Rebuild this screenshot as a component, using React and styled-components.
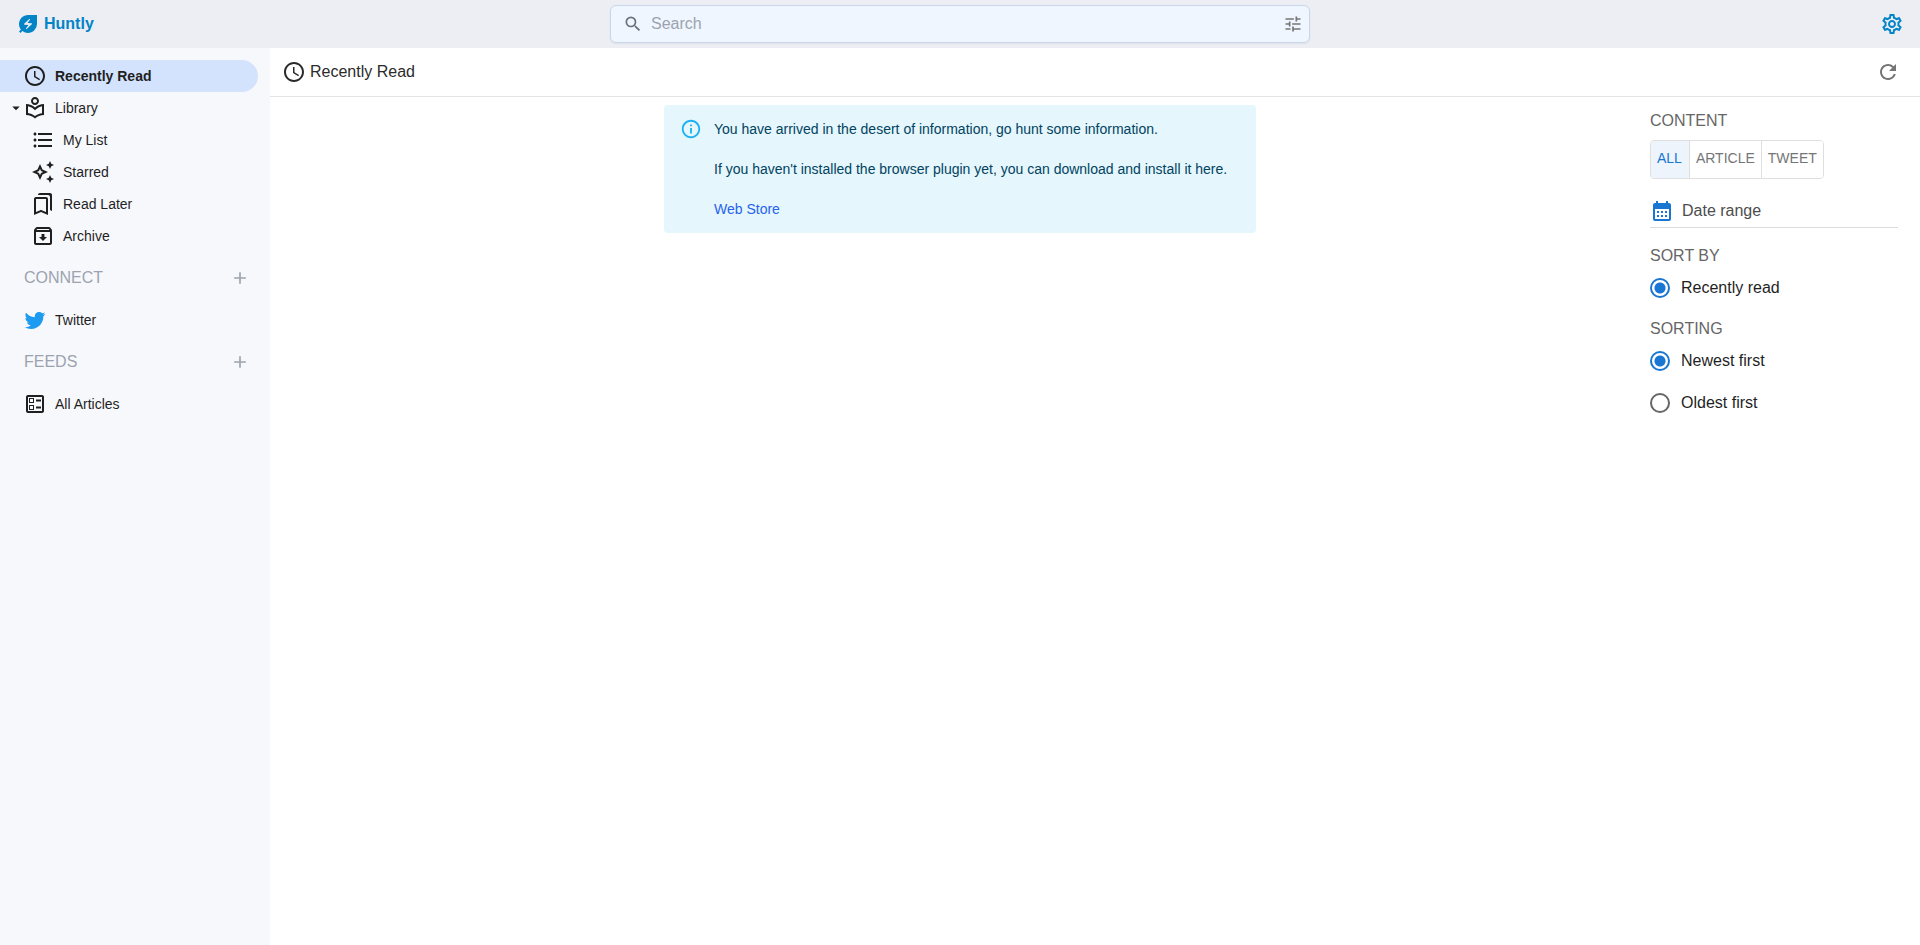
import React, { useState } from "react";
import styled, { createGlobalStyle } from "styled-components";
import {
  MdAccessTime,
  MdAdd,
  MdArrowDropDown,
  MdCalendarMonth,
  MdEnergySavingsLeaf,
  MdFormatListBulleted,
  MdInfoOutline,
  MdOutlineArchive,
  MdOutlineAutoAwesome,
  MdOutlineBallot,
  MdOutlineBookmarks,
  MdOutlineLocalLibrary,
  MdOutlineSettings,
  MdRefresh,
  MdSearch,
  MdTune
} from "react-icons/md";

const GlobalStyle = createGlobalStyle`
  * {
    box-sizing: border-box;
  }
  body {
    margin: 0;
    background: #fff;
    color: #1f1f1f;
    font-family: Arial, "Liberation Sans", Helvetica, sans-serif;
    font-size: 14px;
  }
  button, input {
    font-family: inherit;
  }
  svg {
    display: block;
    flex-shrink: 0;
  }
`;

const Page = styled.div`
  display: flex;
  flex-direction: column;
  min-height: 100vh;
`;

const Header = styled.header`
  display: grid;
  grid-template-columns: 1fr minmax(0, 700px) 1fr;
  align-items: center;
  height: 48px;
  padding: 0 16px;
  background: #edeef4;
`;

const Brand = styled.a`
  display: flex;
  align-items: center;
  gap: 4px;
  color: #0284c7;
  font-size: 16px;
  font-weight: 700;
  text-decoration: none;
`;

const SearchBox = styled.label`
  display: flex;
  align-items: center;
  gap: 8px;
  height: 38px;
  padding: 0 6px 0 12px;
  border: 1px solid #c8d6e8;
  border-radius: 6px;
  background: #eff6ff;
  box-shadow: 0 1px 2px rgba(0, 0, 0, 0.05);
  color: #6b6f76;
`;

const SearchInput = styled.input`
  flex: 1;
  min-width: 0;
  padding: 0;
  border: none;
  outline: none;
  background: transparent;
  font-size: 16px;

  &::placeholder {
    color: #9ca3af;
    opacity: 1;
  }
`;

const IconButton = styled.button`
  display: flex;
  align-items: center;
  justify-content: center;
  padding: 0;
  border: none;
  background: transparent;
  color: ${props => props.$color || "#757575"};
  cursor: pointer;
`;

const HeaderRight = styled.div`
  display: flex;
  justify-content: flex-end;
`;

const Body = styled.div`
  display: flex;
  flex: 1;
`;

const Sidebar = styled.nav`
  flex: 0 0 270px;
  padding: 12px 12px 0 0;
  background: #f7f8fc;
`;

const NavItem = styled.a`
  display: flex;
  align-items: center;
  gap: 8px;
  height: 32px;
  padding-left: ${props => (props.$child ? 31 : props.$expandable ? 7 : 23)}px;
  border-radius: 0 16px 16px 0;
  background: ${props => (props.$active ? "#d3e3fd" : "transparent")};
  color: #1f1f1f;
  font-weight: ${props => (props.$active ? 700 : 400)};
  text-decoration: none;
`;

const NavIcons = styled.span`
  display: flex;
  align-items: center;
  color: ${props => props.$color || "inherit"};
`;

const ExpandArrow = styled(MdArrowDropDown)`
  margin-right: -2px;
`;

const NavHeading = styled.div`
  display: flex;
  align-items: center;
  justify-content: space-between;
  height: 52px;
  padding: 0 8px 0 24px;
  color: #9ca3af;
  font-size: 16px;
`;

const Main = styled.main`
  display: flex;
  flex: 1;
  flex-direction: column;
  min-width: 0;
`;

const TitleBar = styled.div`
  display: flex;
  align-items: center;
  justify-content: space-between;
  height: 49px;
  padding: 0 20px 0 12px;
  border-bottom: 1px solid #e5e5e5;
`;

const PageTitle = styled.h1`
  display: flex;
  align-items: center;
  gap: 4px;
  margin: 0;
  color: #2b2b2b;
  font-size: 16px;
  font-weight: 400;
`;

const Content = styled.div`
  display: flex;
  flex: 1;
`;

const Feed = styled.section`
  display: flex;
  flex: 1;
  align-items: flex-start;
  justify-content: center;
  padding-top: 8px;
`;

const Alert = styled.div`
  display: flex;
  gap: 12px;
  width: 592px;
  max-width: 100%;
  padding: 14px 16px;
  border-radius: 4px;
  background: #e5f6fd;
  color: #014361;
`;

const AlertIcon = styled.div`
  display: flex;
  align-items: center;
  height: 20px;
  color: #1cb0f6;
`;

const AlertText = styled.div`
  display: flex;
  flex-direction: column;
  gap: 20px;
  line-height: 20px;

  p {
    margin: 0;
  }
  a {
    color: #2563eb;
    text-decoration: none;
  }
`;

const Filters = styled.aside`
  flex: 0 0 270px;
  padding: 13px 22px 0 0;
`;

const FilterTitle = styled.h2`
  margin: 0;
  color: #666;
  font-size: 16px;
  font-weight: 400;
  line-height: 22px;
`;

const ToggleGroup = styled.div`
  display: flex;
  width: fit-content;
  margin: 8px 0 16px;
  border: 1px solid #dfdfdf;
  border-radius: 4px;
  overflow: hidden;
`;

const Toggle = styled.button`
  height: 37px;
  padding: 0 6px 4px;
  border: none;
  border-left: 1px solid #dfdfdf;
  background: ${props => (props.$on ? "#edf4fc" : "#fff")};
  color: ${props => (props.$on ? "#1976d2" : "#757575")};
  font-size: 14px;
  cursor: pointer;

  &:first-child {
    padding: 0 7px 4px 6px;
    border-left: none;
  }
`;

const DateField = styled.label`
  display: flex;
  align-items: center;
  gap: 8px;
  height: 33px;
  margin-bottom: 17px;
  border-bottom: 1px solid #dcdcdc;
  color: #1976d2;
`;

const DateInput = styled.input`
  flex: 1;
  min-width: 0;
  padding: 0;
  border: none;
  outline: none;
  background: transparent;
  font-size: 16px;

  &::placeholder {
    color: #4d4d4d;
    opacity: 1;
  }
`;

const RadioGroup = styled.div`
  display: flex;
  flex-direction: column;
  margin-bottom: 9px;
`;

const RadioLabel = styled.label`
  display: flex;
  align-items: center;
  gap: 11px;
  height: 42px;
  color: #1f1f1f;
  font-size: 16px;
`;

const Radio = styled.input`
  width: 20px;
  height: 20px;
  margin: 0;
  appearance: none;
  border: 2px solid #666;
  border-radius: 50%;

  &:checked {
    border-color: #1976d2;
    background: radial-gradient(circle, #1976d2 5px, transparent 6px);
  }
`;

const TwitterIcon = () => (
  <svg width="24" height="24" viewBox="0 0 24 24" fill="currentColor">
    <path d="M22.46 6c-.77.35-1.6.58-2.46.69.88-.53 1.56-1.37 1.88-2.38-.83.5-1.75.85-2.72 1.05C18.37 4.5 17.26 4 16 4c-2.35 0-4.27 1.92-4.27 4.29 0 .34.04.67.11.98C8.28 9.09 5.11 7.38 3 4.79c-.37.63-.58 1.37-.58 2.15 0 1.49.75 2.81 1.91 3.56-.71 0-1.37-.2-1.95-.5v.03c0 2.08 1.48 3.82 3.44 4.21a4.22 4.22 0 0 1-1.93.07 4.28 4.28 0 0 0 4 2.98 8.521 8.521 0 0 1-5.33 1.84c-.34 0-.68-.02-1.02-.06C3.44 20.29 5.7 21 8.12 21 16 21 20.33 14.46 20.33 8.79c0-.19 0-.37-.01-.56.84-.6 1.56-1.36 2.14-2.23z" />
  </svg>
);

const libraryItems = [
  { name: "My List", icon: MdFormatListBulleted },
  { name: "Starred", icon: MdOutlineAutoAwesome },
  { name: "Read Later", icon: MdOutlineBookmarks },
  { name: "Archive", icon: MdOutlineArchive }
];

const contentTypes = ["ALL", "ARTICLE", "TWEET"];

const SideNav = () => (
  <Sidebar>
    <NavItem href="#recent" $active>
      <MdAccessTime size={24} />
      Recently Read
    </NavItem>
    <NavItem href="#library" $expandable>
      <NavIcons>
        <ExpandArrow size={18} />
        <MdOutlineLocalLibrary size={24} />
      </NavIcons>
      Library
    </NavItem>
    {libraryItems.map(item => (
      <NavItem key={item.name} href="#library" $child>
        <item.icon size={24} />
        {item.name}
      </NavItem>
    ))}
    <NavHeading>
      CONNECT
      <IconButton $color="#9ca3af" aria-label="Add connection">
        <MdAdd size={20} />
      </IconButton>
    </NavHeading>
    <NavItem href="#twitter">
      <NavIcons $color="#1d9bf0">
        <TwitterIcon />
      </NavIcons>
      Twitter
    </NavItem>
    <NavHeading>
      FEEDS
      <IconButton $color="#9ca3af" aria-label="Add feed">
        <MdAdd size={20} />
      </IconButton>
    </NavHeading>
    <NavItem href="#feeds">
      <MdOutlineBallot size={24} />
      All Articles
    </NavItem>
  </Sidebar>
);

const FilterPanel = () => {
  const [type, setType] = useState("ALL");
  const [order, setOrder] = useState("newest");

  return (
    <Filters>
      <FilterTitle>CONTENT</FilterTitle>
      <ToggleGroup>
        {contentTypes.map(t => (
          <Toggle
            key={t}
            $on={t === type}
            aria-pressed={t === type}
            onClick={() => setType(t)}
          >
            {t}
          </Toggle>
        ))}
      </ToggleGroup>
      <DateField>
        <MdCalendarMonth size={24} />
        <DateInput type="text" placeholder="Date range" aria-label="Date range" />
      </DateField>
      <FilterTitle>SORT BY</FilterTitle>
      <RadioGroup>
        <RadioLabel>
          <Radio type="radio" name="sort" defaultChecked />
          Recently read
        </RadioLabel>
      </RadioGroup>
      <FilterTitle>SORTING</FilterTitle>
      <RadioGroup>
        <RadioLabel>
          <Radio
            type="radio"
            name="order"
            checked={order === "newest"}
            onChange={() => setOrder("newest")}
          />
          Newest first
        </RadioLabel>
        <RadioLabel>
          <Radio
            type="radio"
            name="order"
            checked={order === "oldest"}
            onChange={() => setOrder("oldest")}
          />
          Oldest first
        </RadioLabel>
      </RadioGroup>
    </Filters>
  );
};

const App = () => (
  <>
    <GlobalStyle />
    <Page>
      <Header>
        <Brand href="#home">
          <MdEnergySavingsLeaf size={24} />
          Huntly
        </Brand>
        <SearchBox>
          <MdSearch size={20} />
          <SearchInput type="text" placeholder="Search" aria-label="Search" />
          <IconButton aria-label="Search options">
            <MdTune size={20} />
          </IconButton>
        </SearchBox>
        <HeaderRight>
          <IconButton $color="#0284c7" aria-label="Settings">
            <MdOutlineSettings size={24} />
          </IconButton>
        </HeaderRight>
      </Header>
      <Body>
        <SideNav />
        <Main>
          <TitleBar>
            <PageTitle>
              <MdAccessTime size={24} />
              Recently Read
            </PageTitle>
            <IconButton aria-label="Refresh">
              <MdRefresh size={24} />
            </IconButton>
          </TitleBar>
          <Content>
            <Feed>
              <Alert role="alert">
                <AlertIcon>
                  <MdInfoOutline size={22} />
                </AlertIcon>
                <AlertText>
                  <p>
                    You have arrived in the desert of information, go hunt some
                    information.
                  </p>
                  <p>
                    If you haven't installed the browser plugin yet, you can
                    download and install it here.
                  </p>
                  <p>
                    <a href="#store">Web Store</a>
                  </p>
                </AlertText>
              </Alert>
            </Feed>
            <FilterPanel />
          </Content>
        </Main>
      </Body>
    </Page>
  </>
);

export default App;
